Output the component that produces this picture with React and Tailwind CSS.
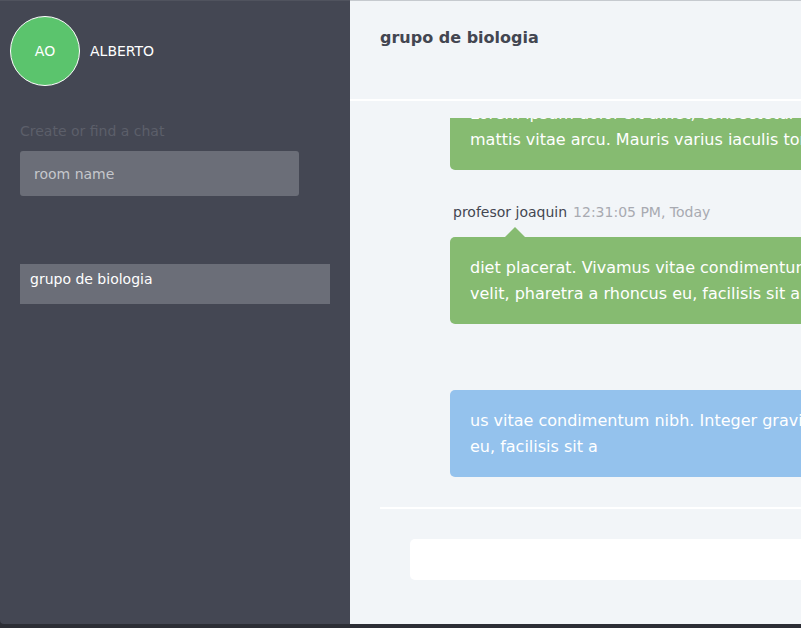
import React from 'react'

const font = { fontFamily: '"DejaVu Sans", "Noto Sans", sans-serif' }

function Bubble({ color, lines, arrow, className = '' }) {
  return (
    <div className={`relative w-[640px] rounded-[5px] px-5 pt-[18px] pb-[17px] text-[16px] leading-[26px] text-white ${color} ${className}`}>
      {arrow && (
        <span className="absolute bottom-full left-[55px] h-0 w-0 border-x-[10px] border-b-[10px] border-x-transparent border-b-[#86bb71]" />
      )}
      {lines.map((l) => (
        <div key={l} className="whitespace-nowrap">{l}</div>
      ))}
    </div>
  )
}

export default function App() {
  return (
    <div style={font} className="h-[628px] w-[801px] overflow-hidden bg-[#2c2e35]">
      <div className="flex h-[624px] w-[1150px] overflow-hidden rounded-bl-[4px]">
        {/* sidebar */}
        <aside className="flex w-[350px] shrink-0 flex-col border-t border-[#50535e] bg-[#444753] px-5">
          <div className="-ml-[10px] mt-[15px] flex items-center gap-[10px]">
            <div className="flex h-[70px] w-[70px] items-center justify-center rounded-full border border-white bg-[#5bc46d] text-[14px] text-white">
              AO
            </div>
            <span className="text-[14px] text-white">ALBERTO</span>
          </div>

          <p className="mt-[35px] text-[14px] leading-5 text-[#5c5f6a]">Create or find a chat</p>
          <input
            placeholder="room name"
            className="mt-[10px] h-[45px] w-[279px] rounded-[3px] bg-[#6b6e78] px-[14px] text-[14px] text-white placeholder-[#c5c7cc] outline-none"
          />

          <div className="mt-[68px] h-[40px] w-[310px] bg-[#6b6e78] px-[10px] pt-[5px] text-[14px] leading-5 text-white">
            grupo de biologia
          </div>
        </aside>

        {/* chat */}
        <main className="flex flex-1 flex-col border-t border-[#c6cacf] bg-[#f2f5f8] text-[#434651]">
          <header className="h-[100px] shrink-0 border-b-2 border-white px-[30px] pt-[27px]">
            <h2 className="text-[16px] font-bold leading-5">grupo de biologia</h2>
          </header>

          <section className="ml-[30px] h-[408px] shrink-0 border-b-2 border-white pt-[17px]">
            <div className="h-[389px] overflow-hidden pl-[70px]">
              <Bubble
                color="bg-[#86bb71]"
                className="-mt-[35px]"
                lines={['Lorem ipsum dolor sit amet, consectetur adipiscing', 'mattis vitae arcu. Mauris varius iaculis tortor']}
              />

              <div className="mb-[15px] mt-[32px] flex items-baseline gap-[6px] pl-[3px] text-[14px] leading-5">
                <span className="text-[#434651]">profesor joaquin</span>
                <span className="text-[#a8aab1]">12:31:05 PM, Today</span>
              </div>
              <Bubble
                color="bg-[#86bb71]"
                arrow
                lines={['diet placerat. Vivamus vitae condimentum nibh.', 'velit, pharetra a rhoncus eu, facilisis sit amet']}
              />

              <Bubble
                color="bg-[#94c2ed]"
                className="mt-[66px]"
                lines={['us vitae condimentum nibh. Integer gravida', 'eu, facilisis sit a']}
              />
            </div>
          </section>

          <div className="px-[60px] pt-[30px]">
            <div className="h-[41px] w-[700px] rounded-[5px] bg-white" />
          </div>
        </main>
      </div>
    </div>
  )
}
